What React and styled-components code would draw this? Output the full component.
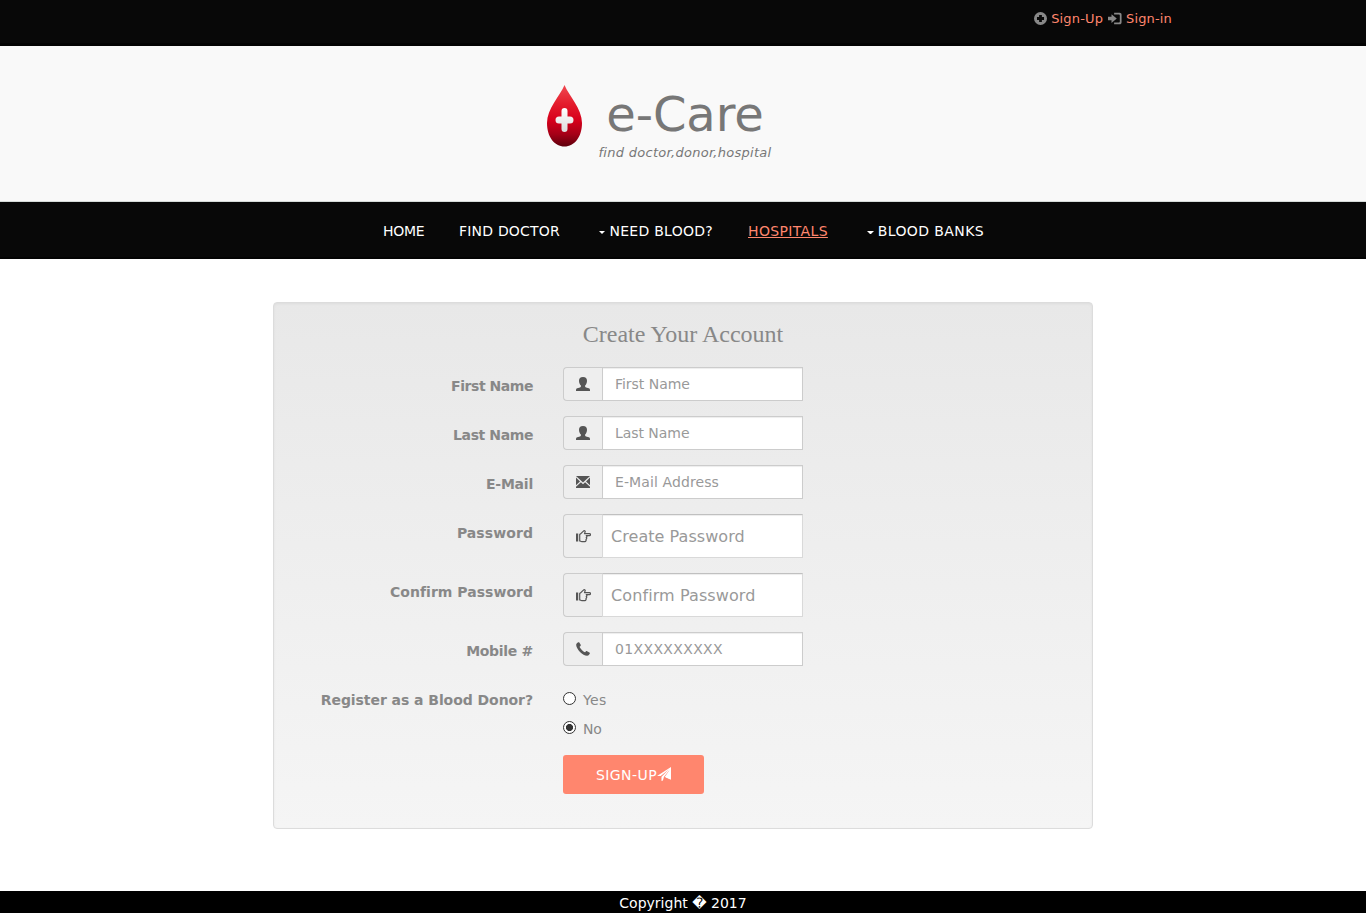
import React from "react";
import styled, { createGlobalStyle } from "styled-components";

const GlobalStyle = createGlobalStyle`
  *, *::before, *::after { box-sizing: border-box; }
  body {
    margin: 0;
    background: #fff;
    color: #888;
    font: 14px/20px Verdana, "DejaVu Sans", sans-serif;
  }
`;

const Page = styled.div`
  display: flex;
  flex-direction: column;
  height: 913px;
  overflow: hidden;
`;

const TopBar = styled.div`
  display: flex;
  justify-content: flex-end;
  align-items: flex-start;
  height: 46px;
  padding: 9px 194px 0 0;
  background: #080808;
  border-bottom: 3px solid #030303;
`;

const TopLink = styled.a`
  display: flex;
  align-items: center;
  margin-left: 5px;
  color: #ff866e;
  font-size: 13px;
  white-space: nowrap;
  text-decoration: none;
  letter-spacing: ${(p) => p.$spacing}px;
  svg { margin: -2px 4px 0 0; color: #888; }
`;

const Header = styled.header`
  display: flex;
  justify-content: center;
  height: 156px;
  background: #f9f9f9;
  border-bottom: 1px solid #d5dbd9;
`;

const Brand = styled.div`
  display: flex;
  width: 272px;
  padding-top: 39px;
`;

const BrandText = styled.div`
  flex: none;
  display: flex;
  flex-direction: column;
  align-items: center;
  width: 174px;
  margin-left: 16px;
`;

const BrandName = styled.div`
  margin-top: 4px;
  color: #777;
  font-size: 48px;
  line-height: 50px;
  letter-spacing: -0.1px;
  white-space: nowrap;
`;

const Tagline = styled.div`
  margin-top: 4px;
  color: #777;
  font-size: 13px;
  font-style: italic;
  letter-spacing: 0.28px;
  white-space: nowrap;
`;

const Nav = styled.nav`
  display: flex;
  height: 57px;
  padding: 19px 0 0 383px;
  background: #080808;
  border-bottom: 2px solid #030303;
`;

const NavItem = styled.a`
  display: flex;
  align-items: center;
  flex: none;
  width: ${(p) => p.$width}px;
  margin-right: ${(p) => p.$gap}px;
  height: 20px;
  color: ${(p) => (p.$active ? "#ff866e" : "#fff")};
  text-decoration: ${(p) => (p.$active ? "underline" : "none")};
  white-space: nowrap;
  letter-spacing: ${(p) => p.$spacing || 0}px;
`;

const Caret = styled.span`
  margin: 3px 4px 0 2px;
  border: 3.5px solid transparent;
  border-width: 3px 3.5px 0;
  border-top-color: #fff;
  width: 7px;
`;

const Panel = styled.form`
  flex: none;
  width: 820px;
  height: 527px;
  margin: 43px 0 0 273px;
  padding-top: 16px;
  border: 1px solid #dcdcdc;
  border-radius: 4px;
  background: linear-gradient(#e8e8e8, #f5f5f5);
  box-shadow: inset 0 1px 3px rgba(0, 0, 0, 0.05);
`;

const Title = styled.h1`
  margin: 0 0 18px;
  color: #888;
  font: 400 24px/30px Georgia, "Liberation Serif", serif;
  letter-spacing: -0.02px;
  text-align: center;
`;

const Row = styled.div`
  display: flex;
  margin-bottom: 15px;
`;

const Label = styled.label`
  width: 259px;
  margin-right: 30px;
  padding-top: 9px;
  font-weight: 700;
  text-align: right;
  white-space: nowrap;
  letter-spacing: ${(p) => p.$spacing}px;
`;

const InputGroup = styled.div`
  display: flex;
  width: 240px;
  height: ${(p) => (p.$tall ? 44 : 34)}px;
`;

const Addon = styled.span`
  display: flex;
  align-items: center;
  justify-content: center;
  flex: none;
  width: 39px;
  border: 1px solid #ccc;
  border-right: 0;
  border-radius: 4px 0 0 4px;
  background: #eee;
  color: #555;
`;

const Input = styled.input`
  min-width: 0;
  flex: 1;
  padding: ${(p) => (p.$tall ? "0 8px" : "0 12px 1px")};
  border: 1px solid ${(p) => (p.$tall ? "#d9d9d9" : "#ccc")};
  border-top-color: ${(p) => (p.$tall ? "#c0c0c0" : "#ccc")};
  border-radius: 0;
  outline: 0;
  background: #fff;
  box-shadow: inset 0 1px 1px rgba(0, 0, 0, 0.075);
  font: ${(p) => (p.$tall ? 16 : 14)}px Verdana, "DejaVu Sans", sans-serif;
  letter-spacing: ${(p) => p.$spacing}px;
  &::placeholder { color: #999; opacity: 1; }
`;

const Choices = styled.div`
  padding-top: 9px;
`;

const Choice = styled.label`
  display: flex;
  height: 20px;
  margin-bottom: 9px;
  letter-spacing: ${(p) => p.$spacing}px;
`;

const Radio = styled.input`
  appearance: none;
  width: 13px;
  height: 13px;
  margin: 2px 7px 0 0;
  border: 1px solid #333;
  border-radius: 50%;
  background: #fff;
  &:checked { background: radial-gradient(circle, #333 0 3.2px, #fff 3.9px); }
`;

const Submit = styled.button`
  display: flex;
  align-items: center;
  justify-content: center;
  width: 141px;
  height: 39px;
  margin: -8px 0 0 289px;
  padding: 0;
  border: 0;
  border-radius: 3px;
  background: #ff866e;
  color: #fff;
  font: 14px Verdana, "DejaVu Sans", sans-serif;
  letter-spacing: 0.45px;
  svg { margin: -1px 0 0; }
`;

const Footer = styled.footer`
  flex: none;
  height: 22px;
  margin-top: auto;
  padding-top: 2px;
  background: #000;
  color: #fff;
  text-align: center;
`;

const Icon = ({ size = 14, width, children }) => (
  <svg width={width || size} height={size} viewBox={`0 0 ${width ? 16 : 14} 14`} fill="currentColor">
    {children}
  </svg>
);

const PlusIcon = () => (
  <Icon size={13}>
    <path fillRule="evenodd" d="M7 0a7 7 0 1 1 0 14A7 7 0 0 1 7 0ZM5.5 3.2v2.3H3.2v3h2.3v2.3h3V8.500h2.300v-3H8.500V3.200Z" />
  </Icon>
);

const LoginIcon = () => (
  <Icon size={13} width={14}>
    <path d="M0 5h4V2l6 5-6 5V9H0Z" />
    <path d="M7 .5h6A2.200 2.200 0 0 1 15.500 3v8a2.200 2.200 0 0 1-2.500 2.500H7v-2h5.500a1 1 0 0 0 1-1v-7a1 1 0 0 0-1-1H7Z" />
  </Icon>
);

const UserIcon = () => (
  <Icon>
    <path d="M7 0C4.200 0 3 1.400 3 3.700c0 2.100.8 3.800 1.900 4.700v1c0 .5-.3.800-.9 1L1.200 11.300C.4 11.600 0 12.100 0 12.900V14h14v-1.100c0-.8-.4-1.300-1.200-1.600L10 10.400c-.6-.2-.9-.5-.9-1v-1C10.200 7.500 11 5.800 11 3.700 11 1.400 9.800 0 7 0Z" />
  </Icon>
);

const MailIcon = () => (
  <Icon>
    <path d="M0 1h14L7 7.400ZM0 2.600l4 3.800L0 10.200ZM14 2.600v7.600L10 6.400ZM4.900 7.200 7 9.200l2.100-2 4.900 4.600V13H0v-1.200Z" />
  </Icon>
);

const HandIcon = () => (
  <Icon width={16}>
    <path d="M1 4.500h2.200v8H1Z" />
    <path d="M4.700 5.400c1.700-.5 2.300-2.500 4-3.500 1-.5 1.800.2 1.400 1L9.500 4.600h5c1.300 0 1.300 2 0 2h-3.300c1 .3 1 1.400.1 1.800.7.500.5 1.500-.3 1.800.4.900-.1 2.400-1.100 2.400H6.800c-1 0-1.300-.7-2.100-.7Z" fill="none" stroke="currentColor" strokeWidth="1.200" strokeLinejoin="round" />
  </Icon>
);

const PhoneIcon = () => (
  <Icon>
    <path d="M.2 2.600c.2-.8 1-1.700 2-2.300.4-.3.800-.2 1.100.2l1.400 2.300c.2.400.1.800-.2 1.100l-.9.800c.5 1.800 3.600 4.900 5.500 5.500l.9-.9c.3-.3.700-.3 1.100-.1l2.300 1.400c.5.300.6.700.3 1.100-.6 1.100-1.500 1.900-2.400 2.100C7 14.100-.3 6.600.2 2.600Z" />
  </Icon>
);

const SendIcon = () => (
  <Icon>
    <path d="M14 0v12.800L8.900 10.600 12.900 2.600 7 9.700 5.900 13.500 4.500 14V9.800L12 2.300 3.700 9.100 0 9Z" />
    <path d="M13 2.600 7.700 10l5.700 2Z" />
  </Icon>
);

const DropLogo = () => (
  <svg width="35" height="62" viewBox="0 0 35 62">
    <defs>
      <linearGradient id="drop" x1="0" y1="0" x2="0" y2="1">
        <stop offset="0" stopColor="#f04a52" />
        <stop offset=".3" stopColor="#e41d2d" />
        <stop offset=".57" stopColor="#d7001b" />
        <stop offset=".8" stopColor="#a50017" />
        <stop offset="1" stopColor="#5e000c" />
      </linearGradient>
      <linearGradient id="cross" x1="0" y1="0" x2="0" y2="1">
        <stop offset="0" stopColor="#fff" />
        <stop offset="1" stopColor="#ddd" />
      </linearGradient>
    </defs>
    <path d="M17.500 0C22 11 35 23.500 35 38c0 14-7.500 23.500-17.500 23.500S0 52 0 38C0 23.500 13 11 17.500 0Z" fill="url(#drop)" />
    <path d="M17.500 23a3 3 0 0 1 3 3v5.500H23a3.500 3.500 0 0 1 0 7h-2.500V44a3 3 0 0 1-6 0v-5.500H12a3.500 3.500 0 0 1 0-7h2.500V26a3 3 0 0 1 3-3Z" fill="url(#cross)" />
  </svg>
);

const fields = [
  { label: "First Name", hint: "First Name", icon: UserIcon, labelSpacing: -0.45, hintSpacing: -0.03 },
  { label: "Last Name", hint: "Last Name", icon: UserIcon, labelSpacing: -0.4, hintSpacing: -0.05 },
  { label: "E-Mail", hint: "E-Mail Address", icon: MailIcon, labelSpacing: -0.22, hintSpacing: 0.1 },
  { label: "Password", hint: "Create Password", icon: HandIcon, tall: true, labelSpacing: 0.08, hintSpacing: 0.05 },
  { label: "Confirm Password", hint: "Confirm Password", icon: HandIcon, tall: true, labelSpacing: 0.02, hintSpacing: 0.1 },
  { label: "Mobile #", hint: "01XXXXXXXXX", icon: PhoneIcon, labelSpacing: -0.3, hintSpacing: 0.35 },
];

export default function App() {
  return (
    <Page>
      <GlobalStyle />
      <TopBar>
        <TopLink $spacing={0.15}><PlusIcon />Sign-Up</TopLink>
        <TopLink $spacing={0.15}><LoginIcon />Sign-in</TopLink>
      </TopBar>
      <Header>
        <Brand>
          <DropLogo />
          <BrandText>
            <BrandName>e-Care</BrandName>
            <Tagline>find doctor,donor,hospital</Tagline>
          </BrandText>
        </Brand>
      </Header>
      <Nav>
        <NavItem $width={41} $gap={35} $spacing={-0.3}>HOME</NavItem>
        <NavItem $width={101} $gap={37} $spacing={0.2}>FIND DOCTOR</NavItem>
        <NavItem $width={116} $gap={35} $spacing={0.27}><Caret />NEED BLOOD?</NavItem>
        <NavItem $width={80} $gap={37} $spacing={0.35} $active>HOSPITALS</NavItem>
        <NavItem $width={119} $gap={0} $spacing={0.4}><Caret />BLOOD BANKS</NavItem>
      </Nav>
      <Panel>
        <Title>Create Your Account</Title>
        {fields.map(({ label, hint, icon: FieldIcon, tall, labelSpacing, hintSpacing }) => (
          <Row key={label}>
            <Label $spacing={labelSpacing}>{label}</Label>
            <InputGroup $tall={tall}>
              <Addon><FieldIcon /></Addon>
              <Input $tall={tall} $spacing={hintSpacing} placeholder={hint} />
            </InputGroup>
          </Row>
        ))}
        <Row>
          <Label $spacing={-0.06}>Register as a Blood Donor?</Label>
          <Choices>
            <Choice $spacing={0.4}><Radio type="radio" name="donor" />Yes</Choice>
            <Choice $spacing={-0.1}><Radio type="radio" name="donor" defaultChecked />No</Choice>
          </Choices>
        </Row>
        <Submit type="button">SIGN-UP<SendIcon /></Submit>
      </Panel>
      <Footer>Copyright � 2017</Footer>
    </Page>
  );
}
